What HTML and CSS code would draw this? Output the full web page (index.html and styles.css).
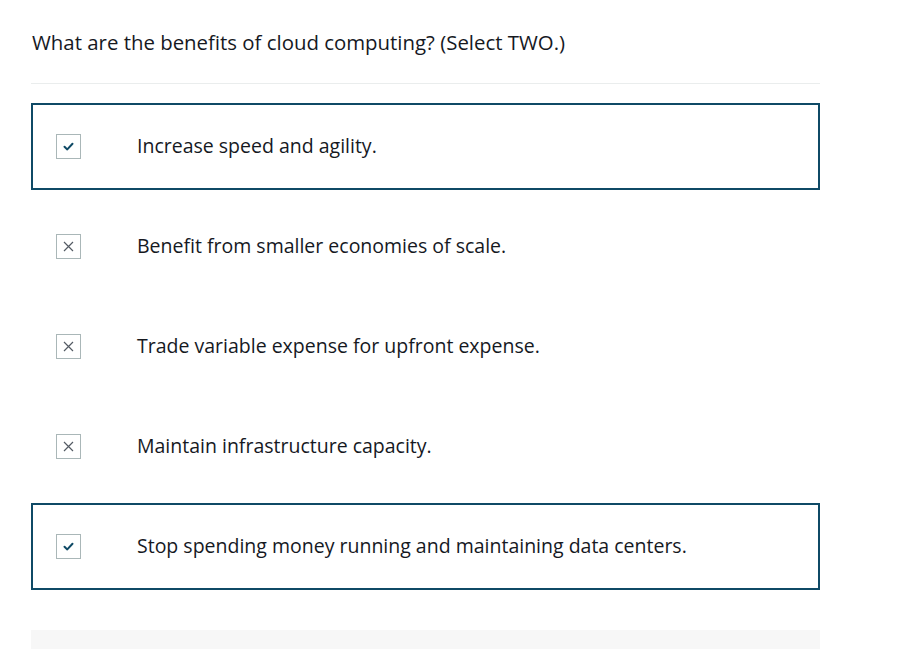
FILE: index.html
```html
<!DOCTYPE html>
<html>
<head>
<meta charset="utf-8">
<link rel="stylesheet" href="styles.css">
</head>
<body>
<div class="quiz">
  <h1 class="question">What are the benefits of cloud computing? (Select TWO.)</h1>
  <div class="divider"></div>
  <div class="options">
    <div class="option selected">
      <span class="box"><svg width="13" height="13" viewBox="0 0 13 13"><path d="M2.5 6.8 L5.3 9.4 L10.5 3.8" fill="none" stroke="#0f4a66" stroke-width="2" stroke-linecap="round" stroke-linejoin="round"/></svg></span>
      <span class="label">Increase speed and agility.</span>
    </div>
    <div class="option">
      <span class="box"><svg width="13" height="13" viewBox="0 0 13 13"><path d="M2 2 L11 11 M11 2 L2 11" fill="none" stroke="#545b64" stroke-width="1.2"/></svg></span>
      <span class="label">Benefit from smaller economies of scale.</span>
    </div>
    <div class="option">
      <span class="box"><svg width="13" height="13" viewBox="0 0 13 13"><path d="M2 2 L11 11 M11 2 L2 11" fill="none" stroke="#545b64" stroke-width="1.2"/></svg></span>
      <span class="label">Trade variable expense for upfront expense.</span>
    </div>
    <div class="option">
      <span class="box"><svg width="13" height="13" viewBox="0 0 13 13"><path d="M2 2 L11 11 M11 2 L2 11" fill="none" stroke="#545b64" stroke-width="1.2"/></svg></span>
      <span class="label">Maintain infrastructure capacity.</span>
    </div>
    <div class="option selected">
      <span class="box"><svg width="13" height="13" viewBox="0 0 13 13"><path d="M2.5 6.8 L5.3 9.4 L10.5 3.8" fill="none" stroke="#0f4a66" stroke-width="2" stroke-linecap="round" stroke-linejoin="round"/></svg></span>
      <span class="label">Stop spending money running and maintaining data centers.</span>
    </div>
  </div>
  <div class="footer-bar"></div>
</div>
</body>
</html>
```
FILE: styles.css
```css
html, body {
  margin: 0;
  padding: 0;
  background: #ffffff;
}
body {
  font-family: "Open Sans", "Noto Sans", sans-serif;
  color: #16191f;
  overflow: hidden;
}
.quiz {
  width: 789px;
  margin-left: 31px;
  padding-top: 28px;
}
.question {
  margin: 0;
  font-size: 20.4px;
  font-weight: 400;
  line-height: 28px;
  padding-left: 1px;
}
.divider {
  height: 1px;
  background: #eaeded;
  margin-top: 27px;
  margin-bottom: 19px;
}
.options {
  display: flex;
  flex-direction: column;
  gap: 13px;
}
.option {
  height: 87px;
  box-sizing: border-box;
  border: 2px solid transparent;
  display: flex;
  align-items: center;
  padding-left: 23px;
}
.option.selected {
  border-color: #0f4a66;
}
.box {
  width: 25px;
  height: 25px;
  box-sizing: border-box;
  border: 1px solid #aab7b8;
  display: flex;
  align-items: center;
  justify-content: center;
  flex-shrink: 0;
}
.label {
  margin-left: 56px;
  margin-bottom: 2px;
  font-size: 19.5px;
  line-height: 24px;
}
.footer-bar {
  margin-top: 40px;
  height: 40px;
  background: #f7f7f7;
}
```
